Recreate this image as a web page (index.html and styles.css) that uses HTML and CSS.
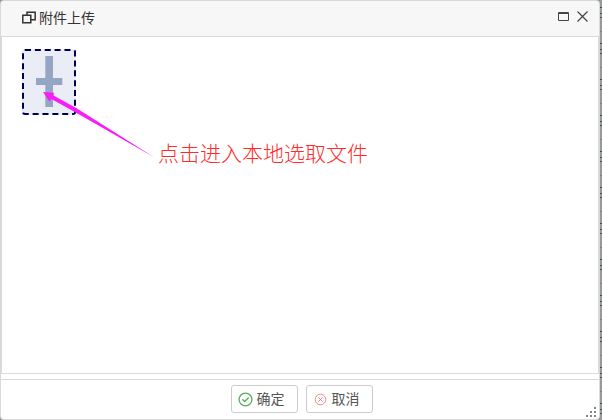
FILE: index.html
```html
<!DOCTYPE html>
<html lang="zh-CN">
<head>
<meta charset="utf-8">
<title>附件上传</title>
<link rel="stylesheet" href="styles.css">
</head>
<body>
<div class="dialog">
  <header class="titlebar">
    <svg class="title-icon" width="14" height="13" viewBox="0 0 14 13"><path d="M5 4V1.200H13.200V8.800H9M.8 4.200H8.800V11.800H.8Z" fill="none" stroke="#333" stroke-width="1.500"/></svg>
    <h1 class="title">附件上传</h1>
    <svg class="maximize" width="11" height="9" viewBox="0 0 11 9"><path d="M.5.500H10.500V8.500H.5ZM0 1.500H11" fill="none" stroke="#444"/></svg>
    <svg class="close" width="11" height="11" viewBox="0 0 11 11"><path d="M.5.500L10.500 10.500M10.500.500L.5 10.500" stroke="#444" stroke-width="1.200"/></svg>
  </header>
  <main class="content">
    <button class="picker" aria-label="添加附件">
      <svg width="50" height="62" viewBox="0 0 50 62"><path d="M21.300 5H29V27H38.300V34H29V56H21.300V34H12V27H21.300Z" fill="#94a6c4"/></svg>
    </button>
    <svg class="arrow" width="113" height="68" viewBox="0 0 113 68"><path d="M0 0L11 .8L10.500 3.500L34 16.500L111.500 65.500L31 19.500L8.300 7L6.300 9.500Z" fill="#f81cf8"/></svg>
    <p class="hint">点击进入本地选取文件</p>
  </main>
  <footer class="actions">
    <button class="btn"><svg width="15" height="15" viewBox="0 0 15 15" fill="none" stroke="#58ad58" stroke-width="1.300"><circle cx="7.500" cy="7.500" r="6.400"/><path d="M4.300 7.300L6.700 9.500L10.700 5.500"/></svg><span>确定</span></button>
    <button class="btn cancel"><svg width="13" height="13" viewBox="0 0 13 13" fill="none" stroke="#f08080" stroke-width=".9"><circle cx="6.500" cy="6.500" r="5.300"/><path d="M4.300 4.300L8.700 8.700M8.700 4.300L4.300 8.700"/></svg><span>取消</span></button>
    <svg class="grip" width="10" height="10" viewBox="0 0 10 10" fill="#858585"><path d="M8 0h2v2H8zM4 4h2v2H4zM8 4h2v2H8zM0 8h2v2H0zM4 8h2v2H4zM8 8h2v2H8z"/></svg>
  </footer>
</div>
<div class="backdrop"></div>
</body>
</html>
```
FILE: styles.css
```css
* { box-sizing: border-box; }
body {
  margin: 0;
  display: flex;
  width: 602px;
  height: 420px;
  overflow: hidden;
  background: #999;
  font-family: "Noto Sans CJK SC", sans-serif;
}
.dialog {
  display: flex;
  flex-direction: column;
  width: 600px;
  height: 420px;
  border: 1px solid #d9d9d9;
  border-radius: 4px;
  background: #fff;
  overflow: hidden;
}
.titlebar {
  display: flex;
  flex: 0 0 35px;
  align-items: center;
  padding: 0 11px 0 21px;
  background: #f7f7f7;
}
.title-icon { margin: 0 3px 2px 0; }
.title {
  flex: 1;
  margin: 0 0 4px;
  font-size: 14px;
  font-weight: 400;
  line-height: 20px;
  color: #333;
}
.maximize { margin: 0 8px 4px 0; }
.close { margin-bottom: 4px; }
.content {
  position: relative;
  flex: 0 0 338px;
  padding: 12px 20px;
  border: 1px solid #d9d9d9;
}
.picker {
  display: block;
  width: 54px;
  height: 66px;
  padding: 0;
  border: 2px dashed #00004f;
  border-radius: 3px;
  background: #eaedf6;
}
.picker svg { display: block; }
.arrow {
  position: absolute;
  left: 41px;
  top: 55px;
}
.hint {
  margin: 22px 0 0 136px;
  font-size: 21px;
  font-weight: 300;
  line-height: 30px;
  white-space: nowrap;
  color: #ff2a2a;
}
.actions {
  position: relative;
  display: flex;
  justify-content: center;
  flex: 1;
  gap: 8px;
  margin-top: 5px;
  padding: 5px 0 0 3px;
  border-top: 1px solid #d9d9d9;
}
.btn {
  display: flex;
  align-items: center;
  gap: 4px;
  width: 67px;
  height: 28px;
  padding: 0 0 0 6px;
  border: 1px solid #ccc;
  border-radius: 3px;
  background: #fff;
  font: 14px/20px "Noto Sans CJK SC", sans-serif;
  color: #555;
}
.btn span { margin-bottom: 2px; }
.cancel { padding-left: 7px; gap: 5px; }
.grip {
  position: absolute;
  right: 3px;
  bottom: 2px;
}
.backdrop {
  width: 2px;
  background: repeating-linear-gradient(#999 0 7px, #404a50 7px 8px, #999 8px 13px, #405550 13px 14px, #999 14px 17px, #505050 17px 18px, #999 18px 31px, #808080 31px 32px, #999 32px 36px);
}
```
